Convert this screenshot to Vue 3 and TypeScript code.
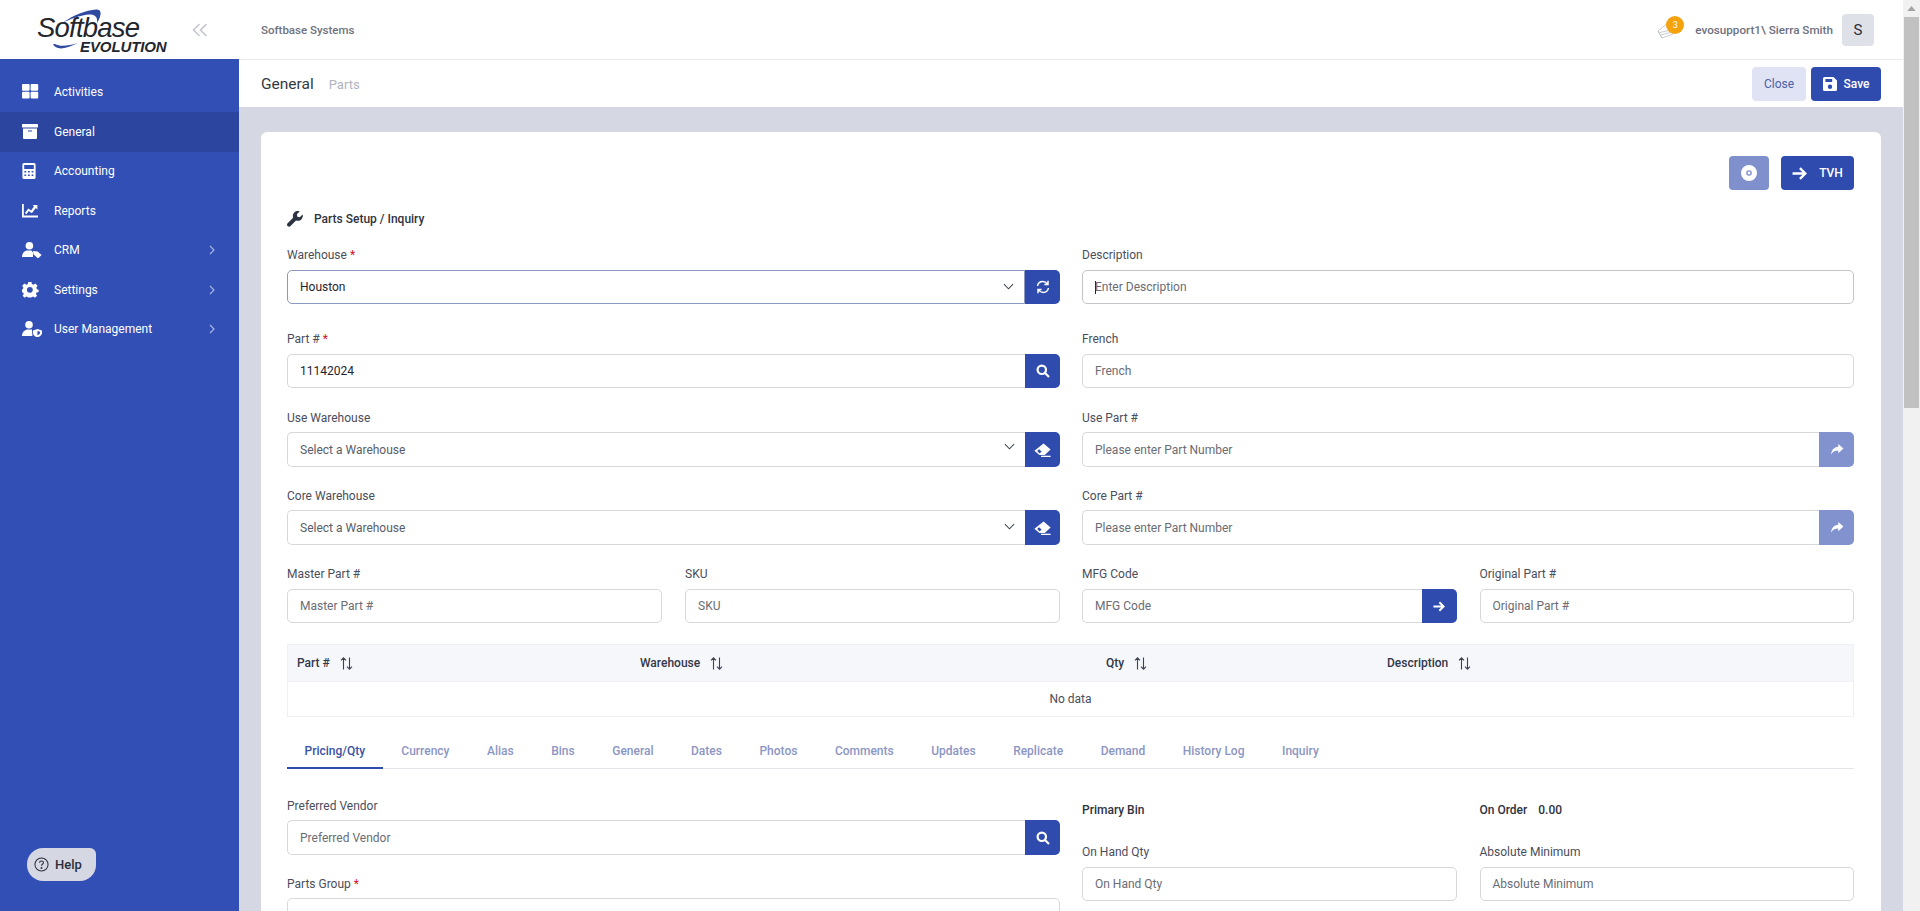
<script setup lang="ts">
const nav = [
  { label: 'Activities', icon: 'grid', arrow: false },
  { label: 'General', icon: 'box', arrow: false, active: true },
  { label: 'Accounting', icon: 'calc', arrow: false },
  { label: 'Reports', icon: 'chart', arrow: false },
  { label: 'CRM', icon: 'crm', arrow: true },
  { label: 'Settings', icon: 'gear', arrow: true },
  { label: 'User Management', icon: 'shield', arrow: true },
]
const tabs = ['Pricing/Qty', 'Currency', 'Alias', 'Bins', 'General', 'Dates', 'Photos', 'Comments', 'Updates', 'Replicate', 'Demand', 'History Log', 'Inquiry']
const columns = [
  { label: 'Part #', width: '343px' },
  { label: 'Warehouse', width: '466px' },
  { label: 'Qty', width: '281px' },
  { label: 'Description', width: 'auto' },
]
</script>

<template>
  <div class="page">
    <aside class="sidebar">
      <div class="logo">
        <svg class="logo-mark" viewBox="0 0 140 56" width="140" height="56">
          <text x="1" y="35" class="logo-top">Softbase</text>
          <text x="44" y="50" class="logo-bottom">EVOLUTION</text>
          <path d="M26 21C38 13 50 8 60 7.5C66 7 66 13 61 21C62 14 58 12 52 12.5C44 13.5 34 17 26 21Z" fill="#2f4a9f" />
          <path d="M17 42C20 48 28 48 42 41C32 44 24 45 19 42Z" fill="#2f4a9f" />
        </svg>
        <svg class="collapse" viewBox="0 0 16 14" width="16" height="14" fill="none" stroke="#c3c6cf" stroke-width="1.6">
          <path d="M7.5 1L1.5 7L7.5 13M14.5 1L8.5 7L14.5 13" />
        </svg>
      </div>
      <nav class="nav">
        <a v-for="item in nav" :key="item.label" class="nav-item" :class="{ active: item.active }">
          <svg class="nav-icon" viewBox="0 0 20 16" width="20" height="16" fill="#fff">
            <template v-if="item.icon === 'grid'">
              <rect x="0" y="0" width="7.6" height="6.8" rx="1" /><rect x="8.6" y="0" width="7.6" height="6.8" rx="1" />
              <rect x="0" y="7.8" width="7.6" height="6.8" rx="1" /><rect x="8.6" y="7.8" width="7.6" height="6.8" rx="1" />
            </template>
            <template v-else-if="item.icon === 'box'">
              <rect x="0" y="0" width="16" height="3.6" rx=".6" />
              <path fill-rule="evenodd" d="M1 4.6H15V14a1 1 0 0 1-1 1H2a1 1 0 0 1-1-1ZM6 6.4V7.6H10V6.4Z" />
            </template>
            <template v-else-if="item.icon === 'calc'">
              <path fill-rule="evenodd" d="M2 0H12a1.6 1.6 0 0 1 1.6 1.6V14.4A1.6 1.6 0 0 1 12 16H2A1.6 1.6 0 0 1 .4 14.4V1.6A1.6 1.6 0 0 1 2 0ZM2.2 2V6H11.8V2ZM2.4 8V9.6H4.2V8ZM6 8V9.6H7.8V8ZM9.6 8V9.6H11.4V8ZM2.4 11.4V13H4.2V11.4ZM6 11.4V13H7.8V11.4ZM9.6 11.4V13H11.4V11.4Z" />
            </template>
            <template v-else-if="item.icon === 'chart'">
              <path d="M0 1H1.8V12.6H16V14.4H0Z" />
              <path d="M3 9.8L6.4 5.4L9.2 7.6L12 3.2L10.6 2H15.4V6.6L13.8 5L9.8 10.2L6.8 8L4.2 11.4Z" />
            </template>
            <template v-else-if="item.icon === 'crm'">
              <circle cx="7.4" cy="3.8" r="3.8" />
              <path d="M0 15C0 10.8 3 8.6 6 8.6H9.4L11 10.4V15Z" />
              <path d="M11 9L15.6 9.4L19.6 13L16 16.4L11.6 12.6Z" />
            </template>
            <template v-else-if="item.icon === 'gear'">
              <path fill-rule="evenodd" d="M6.4 0H9.6L10.1 2.2 11.6 2.9 13.6 1.7 15.8 4 14.6 6 15.2 7.5 17 8 17 10.4 14.9 10.9 14.2 12.4 15.4 14.3 13.2 16.2 11.4 15 9.8 15.7 9.4 16H6.6L6.2 15.7 4.6 15 2.8 16.2 .6 14.3 1.8 12.4 1.1 10.9-1 10.4-1 8 .8 7.5 1.4 6 .2 4 2.4 1.7 4.4 2.9 5.9 2.2ZM8 5.2A3 3 0 1 0 8 11.2 3 3 0 0 0 8 5.2Z" transform="translate(0 -.2) scale(.98)" />
            </template>
            <template v-else>
              <circle cx="7" cy="3.8" r="3.8" />
              <path d="M0 15C0 10.8 3 8.6 6 8.6H10L10.4 15Z" />
              <path fill-rule="evenodd" d="M15.4 8L20 9.6V12C20 14 18 15.6 15.4 16.4C12.8 15.6 11 14 11 12V9.6ZM15.4 10V14.4C16.9 13.8 18 13 18 11.8V10.8Z" />
            </template>
          </svg>
          <span class="nav-label">{{ item.label }}</span>
          <svg v-if="item.arrow" class="nav-arrow" viewBox="0 0 6 10" width="6" height="10" fill="none" stroke="#a9b6e3" stroke-width="1.2">
            <path d="M1 1L5 5L1 9" />
          </svg>
        </a>
      </nav>
      <button class="help">
        <svg viewBox="0 0 16 16" width="15" height="15" fill="none" stroke="#2b2f3a" stroke-width="1.1">
          <circle cx="8" cy="8" r="7" />
          <path d="M5.9 6.2C5.9 4.9 6.9 4.2 8 4.2C9.2 4.2 10.1 5 10.1 6C10.1 7.5 8 7.5 8 9.4" />
          <circle cx="8" cy="11.6" r=".5" fill="#2b2f3a" />
        </svg>
        <span>Help</span>
      </button>
    </aside>

    <main class="main">
      <header class="topbar">
        <span class="company">Softbase Systems</span>
        <div class="user">
          <span class="bell">
            <svg viewBox="0 0 18 18" width="18" height="18" fill="none" stroke="#c2c4cb" stroke-width=".9">
              <path d="M1 10L12 1L16 13L5 17Z" /><path d="M1 10L5 17M2.4 11.6L14 9M3.6 14L15 11" />
            </svg>
            <span class="badge">3</span>
          </span>
          <span class="username">evosupport1\ Sierra Smith</span>
          <span class="avatar">S</span>
        </div>
      </header>

      <div class="subbar">
        <div class="crumbs"><span class="crumb-main">General</span><span class="crumb-sub">Parts</span></div>
        <div class="sub-actions">
          <button class="btn btn-light">Close</button>
          <button class="btn btn-primary btn-save">
            <svg viewBox="0 0 14 14" width="14" height="14" fill="#fff">
              <path fill-rule="evenodd" d="M1.5 0H10.4L14 3.6V12.5A1.5 1.5 0 0 1 12.5 14H1.5A1.5 1.5 0 0 1 0 12.5V1.5A1.5 1.5 0 0 1 1.5 0ZM2.4 2V5H9.2V2ZM7 7.6A2.2 2.2 0 1 0 7 12 2.2 2.2 0 0 0 7 7.6Z" />
            </svg>
            Save
          </button>
        </div>
      </div>

      <div class="content">
        <section class="card">
          <div class="card-actions">
            <button class="btn btn-faded btn-disc">
              <svg viewBox="0 0 16 16" width="16" height="16"><path fill="#fff" fill-rule="evenodd" d="M8 0A8 8 0 1 0 8 16 8 8 0 0 0 8 0ZM8 5.2A2.8 2.8 0 1 1 8 10.8 2.8 2.8 0 0 1 8 5.2Z" /><circle cx="8" cy="8" r="1.4" fill="#fff" /></svg>
            </button>
            <button class="btn btn-primary btn-tvh">
              <svg class="ic-arrow" viewBox="0 0 14 12" width="15" height="13" fill="none" stroke="#fff" stroke-width="2.2">
                <path d="M0.5 6H12M7.4 1L12.4 6L7.4 11" />
              </svg>
              TVH
            </button>
          </div>

          <h2 class="title">
            <svg viewBox="0 0 16 16" width="16" height="16" fill="#2d3340">
              <path d="M15.6 3.4L12.8 6.2L10.3 5.8L9.9 3.2L12.6.4C10.8-.3 8.7.1 7.3 1.5 5.9 2.9 5.5 4.9 6.1 6.7L.6 12.2C-.2 13-.2 14.3.6 15.1 1.4 15.9 2.7 15.9 3.5 15.1L9 9.6C10.9 10.2 12.9 9.8 14.3 8.4 15.7 7 16.2 5.1 15.6 3.4Z" />
            </svg>
            Parts Setup / Inquiry
          </h2>

          <div class="grid">
            <div class="field f-r1">
              <label>Warehouse <i>*</i></label>
              <div class="group">
                <div class="select focused"><span class="val">Houston</span><svg class="chev" viewBox="0 0 12 7" width="11" height="7" fill="none" stroke="#3d4250" stroke-width="1.1"><path d="M1 1L6 6L11 1" /></svg></div>
                <button class="addon"><svg viewBox="0 0 14 14" width="14" height="14" fill="none" stroke="#fff" stroke-width="1.5"><path d="M1.6 6C2 3.4 4.2 1.6 6.8 1.6C8.8 1.6 10.4 2.6 11.4 4.2M12 .8V4.6H8.4" /><path d="M12.4 8C12 10.6 9.8 12.4 7.2 12.4C5.2 12.4 3.6 11.4 2.6 9.8M2 13.2V9.4H5.6" /></svg></button>
              </div>
            </div>
            <div class="field f-r1">
              <label>Description</label>
              <div class="input-box focusish"><span class="caret"></span><span class="ph">Enter Description</span></div>
            </div>

            <div class="field f-r2">
              <label>Part # <i>*</i></label>
              <div class="group">
                <div class="input-box join"><span class="val">11142024</span></div>
                <button class="addon"><svg viewBox="0 0 14 14" width="14" height="14" fill="none" stroke="#fff" stroke-width="2.2"><circle cx="5.8" cy="5.8" r="4.2" /><path d="M9 9L13 13" /></svg></button>
              </div>
            </div>
            <div class="field f-r2">
              <label>French</label>
              <div class="input-box"><span class="ph">French</span></div>
            </div>

            <div class="field f-r3">
              <label>Use Warehouse</label>
              <div class="group">
                <div class="select"><span class="ph dark">Select a Warehouse</span><svg class="chev up" viewBox="0 0 12 7" width="11" height="7" fill="none" stroke="#3d4250" stroke-width="1.1"><path d="M1 1L6 6L11 1" /></svg></div>
                <button class="addon"><svg viewBox="0 0 17 14" width="17" height="14" fill="#fff"><path fill-rule="evenodd" d="M9.6.4L16.6 6.4 10.8 12H5.4L.4 7.8ZM5 6.2L3.2 8 5.6 10.4 7.6 8.4Z" /><rect x="7" y="12.7" width="9.6" height="1.3" /></svg></button>
              </div>
            </div>
            <div class="field f-r3">
              <label>Use Part #</label>
              <div class="group">
                <div class="input-box join"><span class="ph">Please enter Part Number</span></div>
                <button class="addon faded"><svg viewBox="0 0 14 12" width="14" height="11" fill="#fff"><path d="M8.4 0L14 5L8.4 10V7C5 7 2.6 8 0.6 11.4C1 6.6 3.6 3.4 8.4 3Z" /></svg></button>
              </div>
            </div>

            <div class="field f-r4">
              <label>Core Warehouse</label>
              <div class="group">
                <div class="select"><span class="ph dark">Select a Warehouse</span><svg class="chev" viewBox="0 0 12 7" width="11" height="7" fill="none" stroke="#3d4250" stroke-width="1.1"><path d="M1 1L6 6L11 1" /></svg></div>
                <button class="addon"><svg viewBox="0 0 17 14" width="17" height="14" fill="#fff"><path fill-rule="evenodd" d="M9.6.4L16.6 6.4 10.8 12H5.4L.4 7.8ZM5 6.2L3.2 8 5.6 10.4 7.6 8.4Z" /><rect x="7" y="12.7" width="9.6" height="1.3" /></svg></button>
              </div>
            </div>
            <div class="field f-r4">
              <label>Core Part #</label>
              <div class="group">
                <div class="input-box join"><span class="ph">Please enter Part Number</span></div>
                <button class="addon faded"><svg viewBox="0 0 14 12" width="14" height="11" fill="#fff"><path d="M8.4 0L14 5L8.4 10V7C5 7 2.6 8 0.6 11.4C1 6.6 3.6 3.4 8.4 3Z" /></svg></button>
              </div>
            </div>

            <div class="split wide-label">
              <div class="field"><label>Master Part #</label><div class="input-box"><span class="ph">Master Part #</span></div></div>
              <div class="field"><label>SKU</label><div class="input-box"><span class="ph">SKU</span></div></div>
            </div>
            <div class="split wide-label">
              <div class="field">
                <label>MFG Code</label>
                <div class="group">
                  <div class="input-box join"><span class="ph">MFG Code</span></div>
                  <button class="addon"><svg viewBox="0 0 14 12" width="12" height="11" fill="none" stroke="#fff" stroke-width="2.2"><path d="M0.5 6H12M7.4 1L12.4 6L7.4 11" /></svg></button>
                </div>
              </div>
              <div class="field"><label>Original Part #</label><div class="input-box"><span class="ph">Original Part #</span></div></div>
            </div>
          </div>

          <div class="table">
            <div class="thead">
              <div v-for="c in columns" :key="c.label" class="th" :style="{ width: c.width }">
                {{ c.label }}
                <svg viewBox="0 0 13 13" width="13" height="13" fill="none" stroke="#3d4250" stroke-width="1.1"><path d="M3.5 12.5V1M1 3.4L3.5 .9L6 3.4M9.5 .5V12M7 9.6L9.5 12.1L12 9.6" /></svg>
              </div>
            </div>
            <div class="no-data">No data</div>
          </div>

          <div class="tabs">
            <span v-for="(t, i) in tabs" :key="t" class="tab" :class="{ on: i === 0 }">{{ t }}</span>
          </div>

          <div class="grid lower">
            <div class="lower-left">
              <div class="field tight">
                <label>Preferred Vendor</label>
                <div class="group">
                  <div class="input-box join"><span class="ph">Preferred Vendor</span></div>
                  <button class="addon"><svg viewBox="0 0 14 14" width="14" height="14" fill="none" stroke="#fff" stroke-width="2.2"><circle cx="5.8" cy="5.8" r="4.2" /><path d="M9 9L13 13" /></svg></button>
                </div>
              </div>
              <div class="field tight pg">
                <label>Parts Group <i>*</i></label>
                <div class="input-box"></div>
              </div>
            </div>
            <div class="lower-right">
              <div class="split stat-row">
                <strong class="stat">Primary Bin</strong>
                <strong class="stat">On Order <em>0.00</em></strong>
              </div>
              <div class="split">
                <div class="field"><label>On Hand Qty</label><div class="input-box"><span class="ph">On Hand Qty</span></div></div>
                <div class="field"><label>Absolute Minimum</label><div class="input-box"><span class="ph">Absolute Minimum</span></div></div>
              </div>
            </div>
          </div>
        </section>
      </div>
    </main>

    <div class="scrollbar">
      <svg class="sb-up" viewBox="0 0 10 6" width="9" height="5"><path d="M5 0L10 6H0Z" fill="#a3a3a3" /></svg>
      <div class="sb-thumb"></div>
    </div>
  </div>
</template>

<style>
html, body { margin: 0; height: 100%; overflow: hidden; background: #d5d7e3; }
</style>

<style scoped>
* { box-sizing: border-box; }
.page {
  display: flex; width: 1920px; height: 911px; overflow: hidden;
  font-family: Roboto, "Noto Sans", sans-serif; font-size: 12px; color: #3f4254;
}
.sidebar { position: relative; width: 239px; flex: none; background: #324fb5; }
.logo { height: 59px; background: #fff; display: flex; align-items: center; position: relative; }
.logo-mark { flex: none; margin-left: 36px; }
.logo-top { font: italic 400 27.5px "Liberation Sans", sans-serif; letter-spacing: -.8px; fill: #23262e; }
.logo-bottom { font: italic 700 15px "Liberation Sans", sans-serif; letter-spacing: -.1px; fill: #23262e; }
.collapse { position: absolute; left: 192px; top: 23px; }
.nav { padding-top: 13.5px; }
.nav-item { display: flex; align-items: center; height: 39.5px; padding: 0 24px 0 22px; color: #fff; }
.nav-item.active { background: #2c459f; }
.nav-icon { flex: none; margin-right: 12px; }
.nav-label { flex: 1; font-size: 12px; }
.help {
  position: absolute; left: 27px; top: 848px; width: 69px; height: 33px; padding: 0 0 0 7px;
  display: flex; align-items: center; gap: 6px; border: 0;
  border-radius: 16px 6px 16px 16px; background: #d5d7e3; color: #2b2f3a;
  font: 500 13px Roboto, sans-serif;
}

.main { width: 1664px; flex: none; min-width: 0; }
.topbar { height: 60px; background: #fff; border-bottom: 1px solid #e9eaf0; display: flex; align-items: center; justify-content: space-between; padding: 0 29px 0 22px; }
.company { font-size: 11.5px; font-weight: 500; color: #6f7280; }
.user { display: flex; align-items: center; }
.bell { position: relative; width: 28px; height: 32px; margin-right: 10px; }
.bell svg { position: absolute; left: 0; top: 7px; }
.badge { position: absolute; left: 9px; top: 2px; width: 18px; height: 18px; border-radius: 50%; background: #f5a20f; color: #fff; font-size: 9px; line-height: 18px; text-align: center; }
.username { font-size: 11.7px; font-weight: 500; color: #6e7080; margin-right: 9px; }
.avatar { width: 32px; height: 32px; border-radius: 4px; background: #dfe1e8; color: #2b2f3a; font-size: 15px; line-height: 32px; text-align: center; }
.subbar { height: 47px; background: #fff; display: flex; align-items: center; justify-content: space-between; padding: 0 22px; }
.crumb-main { font-size: 15.5px; color: #343845; margin-right: 15px; }
.crumb-sub { font-size: 13px; color: #b0b3bd; }
.sub-actions { display: flex; gap: 5px; }
.btn { height: 34px; border: 0; border-radius: 4px; display: inline-flex; align-items: center; justify-content: center; font: 500 12px Roboto, sans-serif; padding: 0; }
.btn-light { width: 54px; background: #dfe3f4; color: #4b5fa8; font-weight: 400; }
.btn-primary { background: #2f4bae; color: #fff; }
.btn-save { width: 70px; gap: 7px; }
.btn-faded { background: #7f90cc; }
.btn-disc { width: 40px; }
.btn-tvh { width: 73px; gap: 12px; }
.content { height: 804px; padding: 25px 22px 0; overflow: hidden; }
.card { background: #fff; border-radius: 6px; padding: 24px 27px 0 26px; height: 900px; }
.card-actions { display: flex; justify-content: flex-end; gap: 12px; }
.title { margin: 21px 0 0; display: flex; align-items: center; gap: 11px; height: 16px; font-size: 12px; font-weight: 500; color: #2f3340; }
.title svg { margin-top: -1px; }
.grid { display: grid; grid-template-columns: 773px 772px; column-gap: 22px; margin-top: 20px; }
.field { display: flex; flex-direction: column; min-width: 0; }
.field label { font-size: 12px; line-height: 16px; color: #4a4e5c; margin-bottom: 7px; }
.field label i { color: #d0142c; font-style: normal; }
.f-r1 { margin-bottom: 27px; }
.f-r2 { margin-bottom: 22px; }
.f-r3 { margin-bottom: 21px; }
.f-r3 label { margin-bottom: 6px; }
.f-r4 { margin-bottom: 21px; }
.f-r1 .input-box, .f-r1 .group, .f-r2 .input-box, .f-r2 .group { height: 34px; }
.f-r4 label { margin-bottom: 6px; }
.group { display: flex; height: 35px; }
.group > :first-child { flex: 1; min-width: 0; }
.input-box, .select {
  height: 35px; border: 1px solid #d8d8dc; border-radius: 5px; background: #fff;
  display: flex; align-items: center; padding: 0 12px; position: relative; font-size: 12px;
}
.join, .select { border-right: 0; border-radius: 5px 0 0 5px; }
.select.focused { border: 1px solid #8b98bf; }
.f-r1 .select { height: 34px; }
.focusish { border-color: #c4c4cb; }
.caret { width: 1px; height: 13px; background: #20242e; margin-right: -1px; }
.val { color: #1f2430; }
.ph { color: #6a6c76; }
.ph.dark { color: #5a5d68; }
.chev { position: absolute; right: 10px; top: 12px; }
.chev.up { top: 10px; }
.addon { width: 35px; flex: none; border: 0; padding: 0; background: #2f4bae; border-radius: 0 5px 5px 0; display: flex; align-items: center; justify-content: center; }
.addon.faded { background: #8192cf; }
.split { display: grid; grid-template-columns: 1fr 1fr; column-gap: 23px; }
.split .group, .split .input-box { height: 34px; }
.wide-label label { margin-bottom: 7px; }
.table { margin-top: 21px; border: 1px solid #eef0f3; }
.thead { height: 36px; background: #f5f7fa; display: flex; align-items: center; padding-left: 9px; }
.th { display: flex; align-items: center; gap: 10px; font-weight: 500; font-size: 12px; color: #33384a; flex: none; }
.no-data { height: 35px; border-top: 1px solid #eef0f3; text-align: center; line-height: 35px; color: #4a4e5c; }
.tabs { display: flex; margin-top: 15px; height: 37px; border-bottom: 1px solid #e4e5ea; }
.tab { padding: 0 18.75px; line-height: 38px; font-weight: 500; color: #8c96c4; white-space: nowrap; }
.tab.on { color: #3c52a3; border-bottom: 2px solid #2f4bae; height: 37px; padding: 0 17.5px; }
.lower { margin-top: 29px; }
.tight label { margin-bottom: 6px; }
.pg { margin-top: 21px; }
.stat-row { height: 16px; margin-top: 5px; margin-bottom: 25px; }
.stat { font-weight: 500; color: #2f3340; }
.stat em { font-style: normal; margin-left: 8px; }

.scrollbar { position: absolute; left: 1903px; top: 0; width: 17px; height: 911px; background: #f1f1f1; }
.sb-up { position: absolute; left: 4px; top: 6px; }
.sb-thumb { position: absolute; left: 1px; top: 17px; width: 15px; height: 391px; background: #c1c1c1; }
</style>
